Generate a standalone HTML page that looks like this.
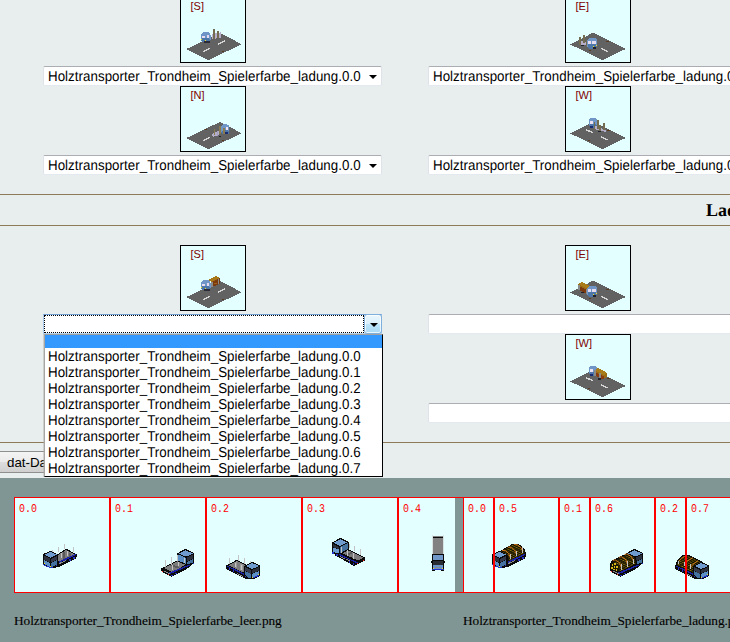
<!DOCTYPE html>
<html lang="de">
<head>
<meta charset="utf-8">
<title>dat-Editor</title>
<style>
html,body{margin:0;padding:0;}
body{width:730px;height:642px;overflow:hidden;position:relative;background:#e8eeee;font-family:"Liberation Serif",serif;font-size:16px;color:#000;}
.abs{position:absolute;}
.hr{position:absolute;left:0;width:730px;height:1px;background:#8c7a58;}
.tile{position:absolute;width:64px;height:64px;border:1px solid #000;background:#e3ffff;overflow:hidden;}
.tile svg{position:absolute;left:0;top:0;}
.tile span{position:absolute;left:9.5px;top:2px;font:11px "Liberation Sans",sans-serif;color:#800000;}
.sel{position:absolute;height:18px;border:1px solid;border-color:#abadb3 #dfe2e9 #e3e9ef #dfe2e9;border-radius:2px;background:#fff;font:13.333px "Liberation Sans",sans-serif;letter-spacing:0.04px;line-height:18px;white-space:nowrap;overflow:hidden;color:#000;}
.sel b{font-weight:normal;position:absolute;left:4px;top:0;transform:scaleY(1.075);transform-origin:0 0;text-rendering:geometricPrecision;}
.sel i{position:absolute;right:4px;top:8px;width:0;height:0;border-left:4px solid transparent;border-right:4px solid transparent;border-top:4px solid #000;}
#drop{position:absolute;left:44px;top:334px;width:337px;height:141px;background:#fff;border:1px solid;border-color:#a0a0a0 #000 #000 #a8a6a2;box-shadow:-1px 0 0 rgba(170,168,164,.45);font:13.333px "Liberation Sans",sans-serif;letter-spacing:0.04px;}
#drop .hl{height:13px;background:#3399ff;}
#drop div{height:16px;line-height:16px;padding-left:3px;white-space:nowrap;}
#drop div+div{transform:scaleY(1.075);transform-origin:0 0;text-rendering:geometricPrecision;}
#panel{position:absolute;left:0;top:478px;width:730px;height:164px;background:#809694;overflow:hidden;}
.img{position:absolute;top:19px;height:96px;background:#e3ffff;}
.t{position:absolute;top:19px;width:94px;height:94px;border:1px solid #ff0000;}
.t span{position:absolute;left:4px;top:4px;text-rendering:geometricPrecision;font:11.8px "Liberation Mono",monospace;letter-spacing:0;transform:scaleX(0.8475);transform-origin:0 0;color:#ff0000;}
.cap{position:absolute;top:135px;-webkit-text-stroke:0.12px #000;letter-spacing:-0.05px;font:13.333px "Liberation Serif",serif;white-space:nowrap;color:#000;}
</style>
</head>
<body>
<!-- section 1 / 2 preview tiles -->
<div class="tile" style="left:180px;top:-3px"><svg width="64" height="64" viewBox="0 0 64 64" shape-rendering="crispEdges"><polygon points="5.2,51.1 38.8,35.0 60.8,46.2 27.2,62.2" fill="#626262"/><line x1="22.0" y1="53.6" x2="28.8" y2="50.5" stroke="#d6d6d6" stroke-width="1.4"/><line x1="37.0" y1="46.4" x2="43.8" y2="43.0" stroke="#d6d6d6" stroke-width="1.4"/><rect x="40.5" y="52.5" width="2.5" height="1.0" fill="#5a3a20"/><polygon points="30.6,36.2 39.7,34.4 39.7,39.6 31.0,41.2" fill="#b4aecb"/><rect x="32.0" y="31.0" width="1.7" height="10.0" fill="#746c50"/><rect x="36.0" y="32.8" width="1.8" height="7.4" fill="#746c50"/><rect x="20.0" y="34.2" width="9.7" height="10.2" rx="3.4" ry="3.8" fill="#6f96c6"/><rect x="20.3" y="40.1" width="9.1" height="4.3" rx="2.2" ry="2.2" fill="#4d76a9"/><rect x="21.4" y="37.6" width="2.6" height="2.6" fill="#e6dcf0"/><rect x="25.6" y="36.8" width="2.6" height="2.8" fill="#e6dcf0"/><rect x="23.2" y="43.2" width="6.0" height="1.6" fill="#2a2a38"/><rect x="20.2" y="40.8" width="1.0" height="1.0" fill="#f0e020"/><rect x="24.3" y="42.2" width="1.0" height="1.0" fill="#f0e020"/></svg><span>[S]</span></div>
<div class="tile" style="left:180px;top:86px"><svg width="64" height="64" viewBox="0 0 64 64" shape-rendering="crispEdges"><polygon points="5.2,51.1 38.8,35.0 60.8,46.2 27.2,62.2" fill="#626262"/><line x1="22.0" y1="53.6" x2="28.8" y2="50.5" stroke="#d6d6d6" stroke-width="1.4"/><rect x="23.5" y="42.0" width="2.5" height="1.0" fill="#5a3a20"/><rect x="40.5" y="52.5" width="2.5" height="1.0" fill="#5a3a20"/><polygon points="30.6,47.2 41.5,41.6 41.5,46.0 31.8,50.2" fill="#b4aecb"/><rect x="32.5" y="42.2" width="1.4" height="6.0" fill="#8a7a50"/><rect x="35.6" y="44.4" width="1.4" height="5.0" fill="#a8a0c0"/><rect x="38.3" y="39.1" width="1.5" height="8.2" fill="#8a7a50"/><rect x="40.1" y="37.3" width="8.2" height="10.1" rx="3.4" ry="3.8" fill="#6f96c6"/><rect x="40.4" y="43.2" width="7.6" height="4.2" rx="2.2" ry="2.2" fill="#4d76a9"/><rect x="42.4" y="41.3" width="1.4" height="6.0" fill="#8a7a50"/><rect x="44.6" y="40.0" width="2.4" height="2.8" fill="#ece2f2"/><rect x="44.2" y="45.4" width="3.0" height="2.0" fill="#1c2a70"/><rect x="37.6" y="48.6" width="2.6" height="1.5" fill="#22222c"/></svg><span>[N]</span></div>
<div class="tile" style="left:565px;top:-3px"><svg width="64" height="64" viewBox="0 0 64 64" shape-rendering="crispEdges"><polygon points="4.2,46.4 27.2,34.6 59.6,51.0 36.4,62.2" fill="#626262"/><line x1="35.3" y1="50.4" x2="41.6" y2="53.4" stroke="#d6d6d6" stroke-width="1.4"/><rect x="40.0" y="43.0" width="2.5" height="1.0" fill="#5a3a20"/><rect x="22.5" y="52.0" width="2.5" height="1.0" fill="#5a3a20"/><polygon points="12.6,42.0 20.7,44.2 20.7,47.6 13.6,46.4" fill="#b4aecb"/><rect x="13.3" y="39.2" width="1.5" height="8.1" fill="#746c50"/><rect x="17.0" y="36.9" width="1.9" height="7.7" fill="#746c50"/><rect x="19.6" y="41.9" width="1.6" height="7.2" fill="#746c50"/><rect x="15.0" y="46.6" width="2.6" height="1.2" fill="#22222c"/><rect x="21.2" y="40.0" width="9.9" height="10.6" rx="3.4" ry="3.8" fill="#6f96c6"/><rect x="21.5" y="46.1" width="9.3" height="4.5" rx="2.2" ry="2.2" fill="#4d76a9"/><rect x="22.2" y="42.6" width="3.0" height="3.4" fill="#e6dcf0"/><rect x="26.0" y="42.6" width="4.2" height="3.2" fill="#e6dcf0"/><rect x="26.6" y="49.0" width="3.6" height="1.8" fill="#20202c"/><rect x="27.4" y="47.6" width="1.0" height="1.0" fill="#f0e020"/><rect x="30.0" y="46.8" width="1.0" height="1.0" fill="#f0e020"/></svg><span>[E]</span></div>
<div class="tile" style="left:565px;top:86px"><svg width="64" height="64" viewBox="0 0 64 64" shape-rendering="crispEdges"><polygon points="4.2,46.4 27.2,34.6 59.6,51.0 36.4,62.2" fill="#626262"/><line x1="20.2" y1="42.7" x2="26.6" y2="45.6" stroke="#d6d6d6" stroke-width="1.4"/><line x1="35.2" y1="50.1" x2="41.5" y2="53.1" stroke="#d6d6d6" stroke-width="1.4"/><rect x="21.5" y="52.6" width="2.5" height="1.0" fill="#5a3a20"/><rect x="41.0" y="43.0" width="2.5" height="1.0" fill="#5a3a20"/><rect x="23.0" y="30.9" width="8.1" height="9.7" rx="3.4" ry="3.8" fill="#6f96c6"/><rect x="23.3" y="36.5" width="7.5" height="4.1" rx="2.2" ry="2.2" fill="#4d76a9"/><rect x="24.4" y="34.0" width="2.6" height="2.6" fill="#ece2f2"/><rect x="24.4" y="38.8" width="2.6" height="2.0" fill="#1c2a70"/><polygon points="27.9,38.2 39.7,43.0 39.7,45.0 28.2,42.0" fill="#b4aecb"/><rect x="27.5" y="35.0" width="1.4" height="7.7" fill="#746c50"/><rect x="31.4" y="33.2" width="1.6" height="8.6" fill="#746c50"/><rect x="33.4" y="38.2" width="1.8" height="6.3" fill="#746c50"/><rect x="37.4" y="36.2" width="1.5" height="6.5" fill="#746c50"/><rect x="32.4" y="43.6" width="2.4" height="1.4" fill="#22222c"/></svg><span>[W]</span></div>
<div class="tile" style="left:180px;top:245px"><svg width="64" height="64" viewBox="0 0 64 64" shape-rendering="crispEdges"><polygon points="5.2,51.1 38.8,35.0 60.8,46.2 27.2,62.2" fill="#626262"/><line x1="22.0" y1="53.6" x2="28.8" y2="50.5" stroke="#d6d6d6" stroke-width="1.4"/><line x1="37.0" y1="46.4" x2="43.8" y2="43.0" stroke="#d6d6d6" stroke-width="1.4"/><rect x="40.5" y="52.5" width="2.5" height="1.0" fill="#5a3a20"/><polygon points="27.0,34.2 35.2,30.1 38.8,31.9 38.8,37.4 32.5,40.5 30.6,40.1 30.6,35.6" fill="#9a6414"/><polygon points="30.8,36.2 38.8,32.2 38.8,37.4 32.5,40.5 30.8,40.1" fill="#7a3a10"/><polygon points="27.0,34.2 35.2,30.1 38.8,31.9 30.6,35.9" fill="#a87818"/><rect x="30.4" y="35.5" width="1.2" height="5.0" fill="#8a8a88"/><rect x="36.6" y="33.0" width="1.2" height="5.0" fill="#8a8a88"/><rect x="33.0" y="37.0" width="3.0" height="1.2" fill="#a06018"/><rect x="20.0" y="34.2" width="9.7" height="10.2" rx="3.4" ry="3.8" fill="#6f96c6"/><rect x="20.3" y="40.1" width="9.1" height="4.3" rx="2.2" ry="2.2" fill="#4d76a9"/><rect x="21.4" y="37.6" width="2.6" height="2.6" fill="#e6dcf0"/><rect x="25.6" y="36.8" width="2.6" height="2.8" fill="#e6dcf0"/><rect x="23.2" y="43.2" width="6.0" height="1.6" fill="#2a2a38"/><rect x="20.2" y="40.8" width="1.0" height="1.0" fill="#f0e020"/><rect x="24.3" y="42.2" width="1.0" height="1.0" fill="#f0e020"/></svg><span>[S]</span></div>
<div class="tile" style="left:565px;top:245px"><svg width="64" height="64" viewBox="0 0 64 64" shape-rendering="crispEdges"><polygon points="4.2,46.4 27.2,34.6 59.6,51.0 36.4,62.2" fill="#626262"/><line x1="35.3" y1="50.4" x2="41.6" y2="53.4" stroke="#d6d6d6" stroke-width="1.4"/><rect x="40.0" y="43.0" width="2.5" height="1.0" fill="#5a3a20"/><rect x="22.5" y="52.0" width="2.5" height="1.0" fill="#5a3a20"/><polygon points="12.1,38.3 15.7,36.0 25.2,40.5 21.2,42.8 21.2,46.4 18.4,46.9 12.6,43.7" fill="#9a6a14"/><polygon points="12.1,38.3 15.7,36.0 25.2,40.5 21.2,42.8" fill="#a87c18"/><polygon points="13.8,40.6 20.6,43.6 20.6,46.4 18.4,46.9 13.8,44.4" fill="#7a3a10"/><rect x="12.4" y="39.0" width="1.2" height="5.0" fill="#8a8a88"/><rect x="19.8" y="43.0" width="1.2" height="4.6" fill="#8a8a88"/><rect x="15.0" y="46.0" width="2.6" height="1.4" fill="#22222c"/><rect x="21.2" y="40.0" width="9.9" height="10.6" rx="3.4" ry="3.8" fill="#6f96c6"/><rect x="21.5" y="46.1" width="9.3" height="4.5" rx="2.2" ry="2.2" fill="#4d76a9"/><rect x="22.2" y="42.6" width="3.0" height="3.4" fill="#e6dcf0"/><rect x="26.0" y="42.6" width="4.2" height="3.2" fill="#e6dcf0"/><rect x="26.6" y="49.0" width="3.6" height="1.8" fill="#20202c"/><rect x="27.4" y="47.6" width="1.0" height="1.0" fill="#f0e020"/><rect x="30.0" y="46.8" width="1.0" height="1.0" fill="#f0e020"/></svg><span>[E]</span></div>
<div class="tile" style="left:565px;top:334px"><svg width="64" height="64" viewBox="0 0 64 64" shape-rendering="crispEdges"><polygon points="4.2,46.4 27.2,34.6 59.6,51.0 36.4,62.2" fill="#626262"/><line x1="20.2" y1="42.7" x2="26.6" y2="45.6" stroke="#d6d6d6" stroke-width="1.4"/><line x1="35.2" y1="50.1" x2="41.5" y2="53.1" stroke="#d6d6d6" stroke-width="1.4"/><rect x="21.5" y="52.6" width="2.5" height="1.0" fill="#5a3a20"/><rect x="41.0" y="43.0" width="2.5" height="1.0" fill="#5a3a20"/><rect x="23.0" y="30.9" width="8.1" height="9.7" rx="3.4" ry="3.8" fill="#6f96c6"/><rect x="23.3" y="36.5" width="7.5" height="4.1" rx="2.2" ry="2.2" fill="#4d76a9"/><rect x="24.4" y="34.0" width="2.6" height="2.6" fill="#ece2f2"/><rect x="24.4" y="38.8" width="2.6" height="2.0" fill="#1c2a70"/><polygon points="28.8,35.6 31.5,32.8 41.0,37.8 41.0,41.4 37.0,44.6 28.8,40.5" fill="#9a6a14"/><polygon points="28.8,35.6 31.5,32.8 41.0,37.8 38.4,40.4" fill="#a87c18"/><polygon points="29.4,37.4 38.0,41.6 38.0,44.0 37.0,44.6 29.4,40.8" fill="#8a3c10"/><rect x="28.2" y="35.4" width="1.3" height="5.6" fill="#8a8a88"/><rect x="33.4" y="38.4" width="1.3" height="5.6" fill="#8a8a88"/><rect x="32.4" y="43.4" width="2.6" height="1.4" fill="#22222c"/></svg><span>[W]</span></div>
<div class="sel" style="left:43px;top:66px;width:337px"><b>Holztransporter_Trondheim_Spielerfarbe_ladung.0.0</b><i></i></div>
<div class="sel" style="left:43px;top:155px;width:337px"><b>Holztransporter_Trondheim_Spielerfarbe_ladung.0.0</b><i></i></div>
<div class="sel" style="left:428px;top:66px;width:337px"><b>Holztransporter_Trondheim_Spielerfarbe_ladung.0.0</b><i></i></div>
<div class="sel" style="left:428px;top:155px;width:337px"><b>Holztransporter_Trondheim_Spielerfarbe_ladung.0.0</b><i></i></div>

<div class="hr" style="top:194px"></div>
<h3 class="abs" style="left:706px;top:201px;margin:0;font:bold 18px 'Liberation Serif',serif;white-space:nowrap;line-height:18px;text-rendering:geometricPrecision">Ladung</h3>
<div class="hr" style="top:225px"></div>

<div class="sel" id="open" style="left:43px;top:314px;width:337px;border-color:#6f9fd2 #a9c9ea #b9d5ee #a9c9ea;border-radius:0"><u style="position:absolute;left:0;top:0;right:17px;bottom:0;border:1px dotted #000"></u></div>
<div class="abs" id="openbtn" style="left:364px;top:314px;width:18px;height:20px;border:1px solid #7fb0dd;border-radius:3px;box-sizing:border-box;box-shadow:inset 0 0 0 1px rgba(255,255,255,.75);background:linear-gradient(#eaf6fd 0,#d9f0fc 48%,#bde6fb 52%,#a7d9f5 100%)"><i style="position:absolute;left:5px;top:8px;width:0;height:0;border-left:4px solid transparent;border-right:4px solid transparent;border-top:4px solid #000"></i></div>
<div class="sel" style="left:428px;top:314px;width:337px"><i></i></div>
<div class="sel" style="left:428px;top:403px;width:337px"><i></i></div>

<div class="hr" style="top:442px"></div>
<div class="abs" id="btn" style="left:-60px;top:451px;width:140px;height:20px;border:1px solid #8e8f8f;border-radius:3px;background:linear-gradient(#f4f4f4 0,#ebebeb 48%,#dddddd 52%,#cfcfcf 100%);font:13.333px 'Liberation Sans',sans-serif;line-height:20px;"><span style="position:absolute;left:66px;top:1px">dat-Datei</span></div>

<div id="drop">
<div class="hl"></div>
<div>Holztransporter_Trondheim_Spielerfarbe_ladung.0.0</div>
<div>Holztransporter_Trondheim_Spielerfarbe_ladung.0.1</div>
<div>Holztransporter_Trondheim_Spielerfarbe_ladung.0.2</div>
<div>Holztransporter_Trondheim_Spielerfarbe_ladung.0.3</div>
<div>Holztransporter_Trondheim_Spielerfarbe_ladung.0.4</div>
<div>Holztransporter_Trondheim_Spielerfarbe_ladung.0.5</div>
<div>Holztransporter_Trondheim_Spielerfarbe_ladung.0.6</div>
<div>Holztransporter_Trondheim_Spielerfarbe_ladung.0.7</div>
</div>

<!-- bottom panel -->
<div id="panel">
 <div class="img" style="left:14px;width:441px"></div>
 <div class="img" style="left:463px;width:300px"></div>
 <svg class="abs" style="left:0;top:-478px" width="730" height="642" viewBox="0 0 730 642" shape-rendering="crispEdges">
<polygon points="57.1,554.7 66.2,548.7 77.3,554.7 76.0,558.4 69.5,561.6 58.8,567.0 54.7,567.8" fill="#0a0a0a"/>
<polygon points="58.4,554.7 66.2,550.1 74.8,554.7 67.0,558.8 59.6,561.6 58.4,561.2" fill="#7c7c7c"/>
<polygon points="62.5,552.6 64.5,551.5 64.5,558.8 62.5,559.8" fill="#5a5a5a"/>
<polygon points="68.6,552.4 70.7,553.4 70.7,556.3 68.6,557.3" fill="#5a5a5a"/>
<rect x="51.7" y="550.1" width="1.0" height="2.2" fill="#c4c4c4"/>
<rect x="57.9" y="546.8" width="1.0" height="5.5" fill="#c4c4c4"/>
<rect x="64.0" y="544.0" width="1.0" height="5.3" fill="#c4c4c4"/>
<rect x="72.9" y="546.8" width="1.0" height="4.7" fill="#c4c4c4"/>
<rect x="60.7" y="553.2" width="1.0" height="4.9" fill="#c4c4c4"/>
<rect x="66.9" y="551.0" width="1.0" height="4.7" fill="#c4c4c4"/>
<polygon points="58.8,561.6 75.6,553.7 76.4,554.8 59.6,562.9" fill="#1c22a8"/>
<polygon points="58.8,563.3 66.2,559.8 66.2,560.8 58.8,564.4" fill="#8a8a8a"/>
<rect x="69.1" y="559.0" width="1.6" height="1.6" fill="#2a30c0"/>
<rect x="73.2" y="557.1" width="1.6" height="1.6" fill="#2a30c0"/>
<polygon points="42.7,554.2 50.5,551.0 58.4,554.5 58.4,564.9 54.2,568.0 49.7,568.0 42.7,564.5" fill="#0a0a0a"/>
<polygon points="44.1,554.7 50.5,552.0 57.0,554.7 50.5,557.8" fill="#6f9bcf"/>
<polygon points="43.8,555.6 50.1,558.8 50.1,562.5 43.8,559.6" fill="#2c2f3c"/>
<polygon points="43.8,560.0 50.1,562.9 50.1,566.8 43.8,563.9" fill="#5b8ec4"/>
<polygon points="51.2,558.8 57.3,555.6 57.3,559.6 51.2,562.5" fill="#343848"/>
<polygon points="51.2,562.9 57.3,560.0 57.3,563.9 54.7,566.2 51.2,566.8" fill="#44719f"/>
<polygon points="43.2,564.1 50.1,567.2 53.0,567.2 53.0,568.0 49.7,568.0 43.2,565.2" fill="#2233cc"/>
<rect x="44.0" y="562.8" width="1.2" height="1.2" fill="#f4e61a"/>
<rect x="49.8" y="565.6" width="1.2" height="1.2" fill="#f4e61a"/>
<polygon points="54.7,564.9 58.4,564.4 58.4,566.6 55.5,567.8" fill="#0a0a0a"/>
<rect x="56.1" y="565.2" width="1.2" height="1.2" fill="#2a30c0"/>
<polygon points="161.0,568.6 177.5,560.0 191.0,564.1 190.2,567.0 172.1,576.7 169.7,576.0 161.0,571.1" fill="#0a0a0a"/>
<polygon points="163.5,568.0 177.5,561.2 186.5,564.4 171.7,572.1" fill="#7c7c7c"/>
<polygon points="169.7,565.2 172.1,563.9 179.5,567.4 177.1,568.6" fill="#5c5c5c"/>
<polygon points="177.3,553.3 185.3,548.7 194.3,553.3 194.3,563.3 189.8,566.2 186.1,565.2 177.3,561.2" fill="#0a0a0a"/>
<polygon points="178.7,553.5 185.3,550.1 192.8,553.5 186.1,556.7" fill="#6f9bcf"/>
<polygon points="178.3,554.5 185.7,557.8 185.7,563.9 178.3,560.6" fill="#5b8ec4"/>
<polygon points="186.8,557.8 193.3,554.5 193.3,558.4 186.8,561.6" fill="#2c2f3c"/>
<polygon points="186.8,562.1 193.3,558.8 193.3,562.7 186.8,564.4" fill="#44719f"/>
<rect x="192.7" y="562.9" width="1.2" height="1.2" fill="#2233cc"/>
<rect x="164.9" y="560.0" width="1.0" height="7.2" fill="#c4c4c4"/>
<rect x="171.0" y="557.1" width="1.0" height="7.4" fill="#c4c4c4"/>
<rect x="176.6" y="554.7" width="1.0" height="5.9" fill="#c4c4c4"/>
<rect x="172.4" y="565.3" width="1.0" height="4.3" fill="#c4c4c4"/>
<rect x="178.2" y="562.2" width="1.0" height="4.1" fill="#c4c4c4"/>
<rect x="184.1" y="558.4" width="1.0" height="4.7" fill="#c4c4c4"/>
<polygon points="168.8,572.7 189.4,564.4 189.9,565.5 169.7,574.2" fill="#1c22a8"/>
<polygon points="163.5,570.3 169.7,573.4 169.7,574.4 163.5,571.3" fill="#8a8a8a"/>
<rect x="162.0" y="570.8" width="1.3" height="1.3" fill="#ff2020"/>
<rect x="167.9" y="573.7" width="1.3" height="1.3" fill="#ff2020"/>
<rect x="171.3" y="574.6" width="1.6" height="1.6" fill="#2a30c0"/>
<rect x="175.3" y="572.6" width="1.6" height="1.6" fill="#2a30c0"/>
<polygon points="225.8,565.8 236.7,559.8 246.6,564.9 245.3,578.1 242.9,577.7 226.4,569.3" fill="#0a0a0a"/>
<polygon points="228.5,565.2 236.7,561.1 245.2,565.3 244.1,571.5 242.5,572.1" fill="#7c7c7c"/>
<polygon points="234.7,562.2 236.7,561.2 236.7,568.0 234.7,567.0" fill="#9a9a9a"/>
<polygon points="240.4,563.5 242.5,564.5 242.5,570.9 240.4,569.9" fill="#9a9a9a"/>
<rect x="229.0" y="557.9" width="1.0" height="5.9" fill="#c4c4c4"/>
<rect x="237.9" y="555.1" width="1.0" height="5.5" fill="#c4c4c4"/>
<rect x="244.0" y="557.9" width="1.0" height="5.9" fill="#c4c4c4"/>
<rect x="249.8" y="561.1" width="1.0" height="2.0" fill="#c4c4c4"/>
<rect x="235.4" y="562.9" width="1.0" height="4.3" fill="#c4c4c4"/>
<rect x="241.1" y="565.3" width="1.0" height="5.1" fill="#c4c4c4"/>
<polygon points="226.8,565.2 243.9,573.6 243.4,574.8 226.4,566.4" fill="#1c22a8"/>
<polygon points="237.1,573.2 243.3,576.0 243.3,577.0 237.1,574.2" fill="#8a8a8a"/>
<rect x="228.5" y="568.0" width="1.6" height="1.6" fill="#2a30c0"/>
<rect x="232.6" y="570.0" width="1.6" height="1.6" fill="#2a30c0"/>
<polygon points="244.4,566.0 252.3,561.9 260.3,565.5 260.3,576.0 252.7,579.3 245.3,578.5 244.4,576.0" fill="#0a0a0a"/>
<polygon points="245.8,566.2 252.3,563.0 258.9,566.0 252.3,569.0" fill="#6f9bcf"/>
<polygon points="245.3,567.2 250.7,569.9 250.7,573.6 245.3,570.9" fill="#343848"/>
<polygon points="245.3,571.3 250.7,574.0 250.7,578.1 247.0,577.3 245.3,575.0" fill="#44719f"/>
<polygon points="251.8,570.1 259.2,567.0 259.2,570.4 251.8,573.6" fill="#2c2f3c"/>
<polygon points="251.8,574.0 259.2,570.8 259.2,574.8 251.8,577.8" fill="#5b8ec4"/>
<polygon points="251.5,577.8 259.3,574.8 259.3,575.9 251.5,578.9" fill="#2233cc"/>
<rect x="252.0" y="576.9" width="1.2" height="1.2" fill="#f4e61a"/>
<rect x="257.9" y="574.0" width="1.2" height="1.2" fill="#f4e61a"/>
<polygon points="244.4,575.2 247.4,576.0 247.4,578.5 244.4,577.3" fill="#0a0a0a"/>
<rect x="245.2" y="576.2" width="1.2" height="1.2" fill="#2a30c0"/>
<polygon points="334.7,552.5 348.7,549.2 365.0,557.4 364.7,560.7 354.5,566.0 351.2,564.4 335.1,555.3" fill="#0a0a0a"/>
<polygon points="342.1,553.0 348.7,550.6 363.1,557.8 357.7,560.4" fill="#7c7c7c"/>
<polygon points="351.2,552.1 353.2,553.0 347.9,555.5 345.8,554.5" fill="#5c5c5c"/>
<polygon points="339.7,553.9 357.9,562.6 357.4,563.7 339.2,555.0" fill="#1c22a8"/>
<polygon points="339.7,555.8 349.5,560.4 349.5,561.4 339.7,556.7" fill="#8a8a8a"/>
<rect x="362.8" y="559.6" width="1.3" height="1.3" fill="#ff2020"/>
<rect x="356.8" y="562.6" width="1.3" height="1.3" fill="#ff2020"/>
<rect x="336.0" y="554.1" width="1.6" height="1.6" fill="#2a30c0"/>
<rect x="348.7" y="561.3" width="1.6" height="1.6" fill="#2a30c0"/>
<rect x="352.8" y="563.4" width="1.6" height="1.6" fill="#2a30c0"/>
<polygon points="331.7,542.6 340.5,537.9 348.9,542.0 348.9,550.0 340.1,554.4 336.0,554.1 331.7,552.5" fill="#0a0a0a"/>
<polygon points="333.2,542.8 340.5,539.3 347.2,542.4 340.1,545.9" fill="#6f9bcf"/>
<polygon points="332.8,543.8 339.0,547.0 339.0,549.2 332.8,547.1" fill="#2c2f3c"/>
<polygon points="332.8,547.5 339.0,549.6 339.0,553.3 332.8,552.1" fill="#6b9bd0"/>
<polygon points="340.2,547.0 347.7,543.4 347.7,549.2 340.2,553.0" fill="#44719f"/>
<rect x="332.3" y="552.3" width="1.2" height="1.2" fill="#2233cc"/>
<rect x="341.0" y="547.1" width="1.0" height="5.9" fill="#c4c4c4"/>
<rect x="348.9" y="544.2" width="1.0" height="3.9" fill="#c4c4c4"/>
<rect x="354.0" y="546.3" width="1.0" height="5.1" fill="#c4c4c4"/>
<rect x="359.9" y="548.8" width="1.0" height="5.9" fill="#c4c4c4"/>
<rect x="347.4" y="550.4" width="1.0" height="5.1" fill="#c4c4c4"/>
<rect x="353.1" y="552.9" width="1.0" height="5.9" fill="#c4c4c4"/>
<polygon points="432.2,535.7 443.7,535.7 443.7,554.6 432.2,554.6" fill="#828282"/>
<polygon points="433.0,536.9 442.9,536.9 442.9,538.2 433.0,538.2" fill="#0a0a0a"/>
<polygon points="431.8,534.9 432.8,534.9 432.8,553.8 431.8,553.8" fill="#d8e4e4"/>
<polygon points="443.1,534.9 444.1,534.9 444.1,553.8 443.1,553.8" fill="#d8e4e4"/>
<polygon points="432.0,553.8 443.9,553.8 443.9,569.8 432.0,569.8" fill="#0a0a0a"/>
<polygon points="431.0,561.0 444.9,561.0 444.9,563.0 431.0,563.0" fill="#0a0a0a"/>
<polygon points="433.3,555.0 442.9,555.0 442.9,559.9 433.3,559.9" fill="#7099c9"/>
<polygon points="433.0,561.2 443.0,561.2 443.0,564.5 433.0,564.5" fill="#2b2d35"/>
<polygon points="433.3,564.9 442.9,564.9 442.9,569.1 433.3,569.1" fill="#6a94c6"/>
<polygon points="435.1,566.9 440.8,566.9 440.8,568.1 435.1,568.1" fill="#8a8a8a"/>
<polygon points="432.2,569.1 443.7,569.1 443.7,570.1 432.2,570.1" fill="#2233cc"/>
<polygon points="432.2,569.8 434.7,569.8 434.7,570.9 432.2,570.9" fill="#0a0a0a"/>
<polygon points="441.2,569.8 443.9,569.8 443.9,570.9 441.2,570.9" fill="#0a0a0a"/>
<rect x="432.9" y="567.7" width="1.2" height="1.2" fill="#f4e61a"/>
<rect x="441.7" y="567.7" width="1.2" height="1.2" fill="#f4e61a"/>
<polygon points="506.1,554.7 515.2,548.7 526.3,554.7 525.0,558.4 518.5,561.6 507.8,567.0 503.7,567.8" fill="#0a0a0a"/>
<polygon points="498.5,552.0 512.5,543.8 516.6,543.6 520.3,545.2 525.2,549.6 525.8,554.7 508.8,562.9 507.5,554.7" fill="#0a0a0a"/>
<clipPath id="c1"><polygon points="500.1,552.2 512.5,545.0 516.3,544.6 519.6,546.0 524.1,550.0 524.4,554.0 508.9,561.2 507.9,555.1" fill="#000"/></clipPath>
<g clip-path="url(#c1)" shape-rendering="auto"><polygon points="500.1,552.2 512.5,545.0 516.3,544.6 519.6,546.0 524.1,550.0 524.4,554.0 508.9,561.2 507.9,555.1" fill="#6f5d0a"/><line x1="476.0" y1="539.2" x2="523.0" y2="515.7" stroke="#0c0a02" stroke-width="0.9"/><line x1="477.3" y1="541.7" x2="524.3" y2="518.3" stroke="#8d7a14" stroke-width="0.9"/><line x1="476.9" y1="540.9" x2="523.8" y2="517.4" stroke="#0c0a02" stroke-width="0.9"/><line x1="477.7" y1="542.6" x2="524.7" y2="519.1" stroke="#0c0a02" stroke-width="0.9"/><line x1="479.0" y1="545.1" x2="526.0" y2="521.7" stroke="#8d7a14" stroke-width="0.9"/><line x1="478.6" y1="544.3" x2="525.5" y2="520.8" stroke="#0c0a02" stroke-width="0.9"/><line x1="479.4" y1="546.0" x2="526.4" y2="522.5" stroke="#0c0a02" stroke-width="0.9"/><line x1="480.7" y1="548.5" x2="527.7" y2="525.0" stroke="#8d7a14" stroke-width="0.9"/><line x1="480.3" y1="547.7" x2="527.2" y2="524.2" stroke="#0c0a02" stroke-width="0.9"/><line x1="481.1" y1="549.4" x2="528.1" y2="525.9" stroke="#0c0a02" stroke-width="0.9"/><line x1="482.4" y1="551.9" x2="529.4" y2="528.4" stroke="#8d7a14" stroke-width="0.9"/><line x1="482.0" y1="551.1" x2="528.9" y2="527.6" stroke="#0c0a02" stroke-width="0.9"/><line x1="482.8" y1="552.8" x2="529.8" y2="529.3" stroke="#0c0a02" stroke-width="0.9"/><line x1="484.1" y1="555.3" x2="531.1" y2="531.8" stroke="#8d7a14" stroke-width="0.9"/><line x1="483.7" y1="554.5" x2="530.6" y2="531.0" stroke="#0c0a02" stroke-width="0.9"/><line x1="484.5" y1="556.2" x2="531.5" y2="532.7" stroke="#0c0a02" stroke-width="0.9"/><line x1="485.8" y1="558.7" x2="532.8" y2="535.2" stroke="#8d7a14" stroke-width="0.9"/><line x1="485.4" y1="557.9" x2="532.3" y2="534.4" stroke="#0c0a02" stroke-width="0.9"/><line x1="486.2" y1="559.6" x2="533.2" y2="536.1" stroke="#0c0a02" stroke-width="0.9"/><line x1="487.5" y1="562.1" x2="534.5" y2="538.6" stroke="#8d7a14" stroke-width="0.9"/><line x1="487.1" y1="561.3" x2="534.0" y2="537.8" stroke="#0c0a02" stroke-width="0.9"/><line x1="487.9" y1="563.0" x2="534.9" y2="539.5" stroke="#0c0a02" stroke-width="0.9"/><line x1="489.2" y1="565.5" x2="536.2" y2="542.0" stroke="#8d7a14" stroke-width="0.9"/><line x1="488.8" y1="564.7" x2="535.7" y2="541.2" stroke="#0c0a02" stroke-width="0.9"/><line x1="489.6" y1="566.4" x2="536.6" y2="542.9" stroke="#0c0a02" stroke-width="0.9"/><line x1="490.9" y1="568.9" x2="537.9" y2="545.4" stroke="#8d7a14" stroke-width="0.9"/><line x1="490.5" y1="568.1" x2="537.4" y2="544.6" stroke="#0c0a02" stroke-width="0.9"/><line x1="491.3" y1="569.8" x2="538.3" y2="546.3" stroke="#0c0a02" stroke-width="0.9"/><line x1="492.6" y1="572.3" x2="539.6" y2="548.8" stroke="#8d7a14" stroke-width="0.9"/><line x1="492.2" y1="571.5" x2="539.1" y2="548.0" stroke="#0c0a02" stroke-width="0.9"/><line x1="493.0" y1="573.2" x2="540.0" y2="549.7" stroke="#0c0a02" stroke-width="0.9"/><line x1="494.3" y1="575.7" x2="541.3" y2="552.2" stroke="#8d7a14" stroke-width="0.9"/><line x1="493.9" y1="574.9" x2="540.8" y2="551.4" stroke="#0c0a02" stroke-width="0.9"/><line x1="494.7" y1="576.6" x2="541.7" y2="553.1" stroke="#0c0a02" stroke-width="0.9"/><line x1="496.0" y1="579.1" x2="543.0" y2="555.6" stroke="#8d7a14" stroke-width="0.9"/><line x1="495.6" y1="578.3" x2="542.5" y2="554.8" stroke="#0c0a02" stroke-width="0.9"/><line x1="496.4" y1="580.0" x2="543.4" y2="556.5" stroke="#0c0a02" stroke-width="0.9"/><line x1="497.7" y1="582.5" x2="544.7" y2="559.0" stroke="#8d7a14" stroke-width="0.9"/><line x1="497.3" y1="581.7" x2="544.2" y2="558.2" stroke="#0c0a02" stroke-width="0.9"/><line x1="498.1" y1="583.4" x2="545.1" y2="559.9" stroke="#0c0a02" stroke-width="0.9"/><line x1="499.4" y1="585.9" x2="546.4" y2="562.4" stroke="#8d7a14" stroke-width="0.9"/><line x1="499.0" y1="585.1" x2="545.9" y2="561.6" stroke="#0c0a02" stroke-width="0.9"/><line x1="499.8" y1="586.8" x2="546.8" y2="563.3" stroke="#0c0a02" stroke-width="0.9"/><line x1="501.1" y1="589.3" x2="548.1" y2="565.8" stroke="#8d7a14" stroke-width="0.9"/><line x1="500.7" y1="588.5" x2="547.6" y2="565.0" stroke="#0c0a02" stroke-width="0.9"/><line x1="501.5" y1="590.2" x2="548.5" y2="566.7" stroke="#0c0a02" stroke-width="0.9"/><line x1="502.7" y1="513.3" x2="549.7" y2="536.8" stroke="#0c0a02" stroke-width="0.8"/><line x1="501.6" y1="515.6" x2="548.5" y2="539.1" stroke="#0c0a02" stroke-width="0.8"/><line x1="500.4" y1="517.9" x2="547.4" y2="541.4" stroke="#0c0a02" stroke-width="0.8"/><line x1="499.2" y1="520.3" x2="546.2" y2="543.7" stroke="#0c0a02" stroke-width="0.8"/><line x1="498.1" y1="522.6" x2="545.0" y2="546.1" stroke="#0c0a02" stroke-width="0.8"/><line x1="496.9" y1="524.9" x2="543.9" y2="548.4" stroke="#0c0a02" stroke-width="0.8"/><line x1="495.8" y1="527.2" x2="542.7" y2="550.7" stroke="#0c0a02" stroke-width="0.8"/><line x1="494.6" y1="529.6" x2="541.5" y2="553.0" stroke="#0c0a02" stroke-width="0.8"/><line x1="493.4" y1="531.9" x2="540.4" y2="555.4" stroke="#0c0a02" stroke-width="0.8"/><line x1="492.3" y1="534.2" x2="539.2" y2="557.7" stroke="#0c0a02" stroke-width="0.8"/><line x1="491.1" y1="536.5" x2="538.1" y2="560.0" stroke="#0c0a02" stroke-width="0.8"/><line x1="489.9" y1="538.9" x2="536.9" y2="562.3" stroke="#0c0a02" stroke-width="0.8"/><line x1="488.8" y1="541.2" x2="535.7" y2="564.7" stroke="#0c0a02" stroke-width="0.8"/><line x1="487.6" y1="543.5" x2="534.6" y2="567.0" stroke="#0c0a02" stroke-width="0.8"/><line x1="486.5" y1="545.8" x2="533.4" y2="569.3" stroke="#0c0a02" stroke-width="0.8"/><line x1="485.3" y1="548.2" x2="532.2" y2="571.6" stroke="#0c0a02" stroke-width="0.8"/><line x1="484.1" y1="550.5" x2="531.1" y2="574.0" stroke="#0c0a02" stroke-width="0.8"/><line x1="483.0" y1="552.8" x2="529.9" y2="576.3" stroke="#0c0a02" stroke-width="0.8"/><line x1="481.8" y1="555.1" x2="528.8" y2="578.6" stroke="#0c0a02" stroke-width="0.8"/><line x1="480.6" y1="557.5" x2="527.6" y2="580.9" stroke="#0c0a02" stroke-width="0.8"/><line x1="479.5" y1="559.8" x2="526.4" y2="583.3" stroke="#0c0a02" stroke-width="0.8"/><line x1="478.3" y1="562.1" x2="525.3" y2="585.6" stroke="#0c0a02" stroke-width="0.8"/><line x1="477.2" y1="564.4" x2="524.1" y2="587.9" stroke="#0c0a02" stroke-width="0.8"/><line x1="476.0" y1="566.8" x2="522.9" y2="590.2" stroke="#0c0a02" stroke-width="0.8"/><line x1="474.8" y1="569.1" x2="521.8" y2="592.6" stroke="#0c0a02" stroke-width="0.8"/></g>
<polyline points="502.0,550.4 505.5,550.5 508.8,553.8 510.2,557.5" fill="none" stroke="#e07a1a" stroke-width="0.9" shape-rendering="auto"/>
<polyline points="507.9,547.1 511.6,547.4 514.9,550.5 516.3,554.2" fill="none" stroke="#e07a1a" stroke-width="0.9" shape-rendering="auto"/>
<polyline points="513.9,544.5 517.4,544.8 521.1,547.7 522.6,551.2" fill="none" stroke="#e07a1a" stroke-width="0.9" shape-rendering="auto"/>
<rect x="510.1" y="553.8" width="1.0" height="5.1" fill="#c4c4c4"/>
<rect x="516.1" y="550.7" width="1.0" height="5.1" fill="#c4c4c4"/>
<rect x="522.2" y="547.4" width="1.0" height="5.1" fill="#c4c4c4"/>
<polygon points="507.8,561.6 524.6,553.7 525.4,554.8 508.6,562.9" fill="#1c22a8"/>
<polygon points="507.8,563.3 515.2,559.8 515.2,560.8 507.8,564.4" fill="#8a8a8a"/>
<rect x="518.1" y="559.0" width="1.6" height="1.6" fill="#2a30c0"/>
<rect x="522.2" y="557.1" width="1.6" height="1.6" fill="#2a30c0"/>
<polygon points="491.7,554.2 499.5,551.0 507.4,554.5 507.4,564.9 503.2,568.0 498.7,568.0 491.7,564.5" fill="#0a0a0a"/>
<polygon points="493.1,554.7 499.5,552.0 506.0,554.7 499.5,557.8" fill="#6f9bcf"/>
<polygon points="492.8,555.6 499.1,558.8 499.1,562.5 492.8,559.6" fill="#2c2f3c"/>
<polygon points="492.8,560.0 499.1,562.9 499.1,566.8 492.8,563.9" fill="#5b8ec4"/>
<polygon points="500.2,558.8 506.3,555.6 506.3,559.6 500.2,562.5" fill="#343848"/>
<polygon points="500.2,562.9 506.3,560.0 506.3,563.9 503.7,566.2 500.2,566.8" fill="#44719f"/>
<polygon points="492.2,564.1 499.1,567.2 502.0,567.2 502.0,568.0 498.7,568.0 492.2,565.2" fill="#2233cc"/>
<rect x="493.0" y="562.8" width="1.2" height="1.2" fill="#f4e61a"/>
<rect x="498.8" y="565.6" width="1.2" height="1.2" fill="#f4e61a"/>
<polygon points="503.7,564.9 507.4,564.4 507.4,566.6 504.5,567.8" fill="#0a0a0a"/>
<rect x="505.1" y="565.2" width="1.2" height="1.2" fill="#2a30c0"/>
<polygon points="610.0,568.6 626.5,560.0 640.0,564.1 639.2,567.0 621.1,576.7 618.7,576.0 610.0,571.1" fill="#0a0a0a"/>
<polygon points="626.3,553.3 634.3,548.7 643.3,553.3 643.3,563.3 638.8,566.2 635.1,565.2 626.3,561.2" fill="#0a0a0a"/>
<polygon points="627.7,553.5 634.3,550.1 641.8,553.5 635.1,556.7" fill="#6f9bcf"/>
<polygon points="627.3,554.5 634.7,557.8 634.7,563.9 627.3,560.6" fill="#5b8ec4"/>
<polygon points="635.8,557.8 642.3,554.5 642.3,558.4 635.8,561.6" fill="#2c2f3c"/>
<polygon points="635.8,562.1 642.3,558.8 642.3,562.7 635.8,564.4" fill="#44719f"/>
<rect x="641.7" y="562.9" width="1.2" height="1.2" fill="#2233cc"/>
<polygon points="609.6,563.9 612.4,560.1 627.5,553.2 630.3,554.1 635.3,557.0 636.5,559.7 636.5,565.0 619.7,573.0 615.5,572.0 609.8,568.3" fill="#0a0a0a"/>
<clipPath id="c2"><polygon points="614.3,561.5 627.5,554.6 630.2,555.2 634.3,557.7 635.3,560.1 635.3,564.2 619.7,571.6 618.8,566.2" fill="#000"/></clipPath>
<g clip-path="url(#c2)" shape-rendering="auto"><polygon points="614.3,561.5 627.5,554.6 630.2,555.2 634.3,557.7 635.3,560.1 635.3,564.2 619.7,571.6 618.8,566.2" fill="#6f5d0a"/><line x1="592.8" y1="550.4" x2="633.9" y2="529.9" stroke="#8d7a14" stroke-width="0.9"/><line x1="592.4" y1="549.5" x2="633.4" y2="529.0" stroke="#0c0a02" stroke-width="0.9"/><line x1="593.2" y1="551.2" x2="634.3" y2="530.7" stroke="#0c0a02" stroke-width="0.9"/><line x1="594.5" y1="553.8" x2="635.6" y2="533.3" stroke="#8d7a14" stroke-width="0.9"/><line x1="594.1" y1="552.9" x2="635.1" y2="532.4" stroke="#0c0a02" stroke-width="0.9"/><line x1="594.9" y1="554.6" x2="636.0" y2="534.1" stroke="#0c0a02" stroke-width="0.9"/><line x1="596.2" y1="557.2" x2="637.3" y2="536.7" stroke="#8d7a14" stroke-width="0.9"/><line x1="595.8" y1="556.3" x2="636.8" y2="535.8" stroke="#0c0a02" stroke-width="0.9"/><line x1="596.6" y1="558.0" x2="637.7" y2="537.5" stroke="#0c0a02" stroke-width="0.9"/><line x1="597.9" y1="560.6" x2="639.0" y2="540.1" stroke="#8d7a14" stroke-width="0.9"/><line x1="597.5" y1="559.7" x2="638.5" y2="539.2" stroke="#0c0a02" stroke-width="0.9"/><line x1="598.3" y1="561.4" x2="639.4" y2="540.9" stroke="#0c0a02" stroke-width="0.9"/><line x1="599.6" y1="564.0" x2="640.7" y2="543.5" stroke="#8d7a14" stroke-width="0.9"/><line x1="599.2" y1="563.1" x2="640.2" y2="542.6" stroke="#0c0a02" stroke-width="0.9"/><line x1="600.0" y1="564.8" x2="641.1" y2="544.3" stroke="#0c0a02" stroke-width="0.9"/><line x1="601.3" y1="567.4" x2="642.4" y2="546.9" stroke="#8d7a14" stroke-width="0.9"/><line x1="600.9" y1="566.5" x2="641.9" y2="546.0" stroke="#0c0a02" stroke-width="0.9"/><line x1="601.7" y1="568.2" x2="642.8" y2="547.7" stroke="#0c0a02" stroke-width="0.9"/><line x1="603.0" y1="570.8" x2="644.1" y2="550.3" stroke="#8d7a14" stroke-width="0.9"/><line x1="602.6" y1="569.9" x2="643.6" y2="549.4" stroke="#0c0a02" stroke-width="0.9"/><line x1="603.4" y1="571.6" x2="644.5" y2="551.1" stroke="#0c0a02" stroke-width="0.9"/><line x1="604.7" y1="574.2" x2="645.8" y2="553.7" stroke="#8d7a14" stroke-width="0.9"/><line x1="604.3" y1="573.3" x2="645.3" y2="552.8" stroke="#0c0a02" stroke-width="0.9"/><line x1="605.1" y1="575.0" x2="646.2" y2="554.5" stroke="#0c0a02" stroke-width="0.9"/><line x1="606.4" y1="577.6" x2="647.5" y2="557.0" stroke="#8d7a14" stroke-width="0.9"/><line x1="606.0" y1="576.7" x2="647.0" y2="556.2" stroke="#0c0a02" stroke-width="0.9"/><line x1="606.8" y1="578.4" x2="647.9" y2="557.9" stroke="#0c0a02" stroke-width="0.9"/><line x1="608.1" y1="581.0" x2="649.2" y2="560.4" stroke="#8d7a14" stroke-width="0.9"/><line x1="607.7" y1="580.1" x2="648.7" y2="559.6" stroke="#0c0a02" stroke-width="0.9"/><line x1="608.5" y1="581.8" x2="649.6" y2="561.3" stroke="#0c0a02" stroke-width="0.9"/><line x1="609.8" y1="584.4" x2="650.9" y2="563.8" stroke="#8d7a14" stroke-width="0.9"/><line x1="609.4" y1="583.5" x2="650.4" y2="563.0" stroke="#0c0a02" stroke-width="0.9"/><line x1="610.2" y1="585.2" x2="651.3" y2="564.7" stroke="#0c0a02" stroke-width="0.9"/><line x1="611.5" y1="587.8" x2="652.6" y2="567.2" stroke="#8d7a14" stroke-width="0.9"/><line x1="611.1" y1="586.9" x2="652.1" y2="566.4" stroke="#0c0a02" stroke-width="0.9"/><line x1="611.9" y1="588.6" x2="653.0" y2="568.1" stroke="#0c0a02" stroke-width="0.9"/><line x1="613.2" y1="591.2" x2="654.3" y2="570.6" stroke="#8d7a14" stroke-width="0.9"/><line x1="612.8" y1="590.3" x2="653.8" y2="569.8" stroke="#0c0a02" stroke-width="0.9"/><line x1="613.6" y1="592.0" x2="654.7" y2="571.5" stroke="#0c0a02" stroke-width="0.9"/><line x1="614.9" y1="594.6" x2="656.0" y2="574.0" stroke="#8d7a14" stroke-width="0.9"/><line x1="614.5" y1="593.7" x2="655.5" y2="573.2" stroke="#0c0a02" stroke-width="0.9"/><line x1="615.3" y1="595.4" x2="656.4" y2="574.9" stroke="#0c0a02" stroke-width="0.9"/><line x1="616.6" y1="598.0" x2="657.7" y2="577.4" stroke="#8d7a14" stroke-width="0.9"/><line x1="616.2" y1="597.1" x2="657.2" y2="576.6" stroke="#0c0a02" stroke-width="0.9"/><line x1="615.9" y1="529.5" x2="657.0" y2="550.1" stroke="#0c0a02" stroke-width="0.8"/><line x1="614.7" y1="531.9" x2="655.8" y2="552.4" stroke="#0c0a02" stroke-width="0.8"/><line x1="613.6" y1="534.2" x2="654.6" y2="554.7" stroke="#0c0a02" stroke-width="0.8"/><line x1="612.4" y1="536.5" x2="653.5" y2="557.1" stroke="#0c0a02" stroke-width="0.8"/><line x1="611.2" y1="538.8" x2="652.3" y2="559.4" stroke="#0c0a02" stroke-width="0.8"/><line x1="610.1" y1="541.2" x2="651.1" y2="561.7" stroke="#0c0a02" stroke-width="0.8"/><line x1="608.9" y1="543.5" x2="650.0" y2="564.0" stroke="#0c0a02" stroke-width="0.8"/><line x1="607.7" y1="545.8" x2="648.8" y2="566.4" stroke="#0c0a02" stroke-width="0.8"/><line x1="606.6" y1="548.1" x2="647.7" y2="568.7" stroke="#0c0a02" stroke-width="0.8"/><line x1="605.4" y1="550.5" x2="646.5" y2="571.0" stroke="#0c0a02" stroke-width="0.8"/><line x1="604.3" y1="552.8" x2="645.3" y2="573.3" stroke="#0c0a02" stroke-width="0.8"/><line x1="603.1" y1="555.1" x2="644.2" y2="575.7" stroke="#0c0a02" stroke-width="0.8"/><line x1="601.9" y1="557.5" x2="643.0" y2="578.0" stroke="#0c0a02" stroke-width="0.8"/><line x1="600.8" y1="559.8" x2="641.8" y2="580.3" stroke="#0c0a02" stroke-width="0.8"/><line x1="599.6" y1="562.1" x2="640.7" y2="582.6" stroke="#0c0a02" stroke-width="0.8"/><line x1="598.4" y1="564.4" x2="639.5" y2="585.0" stroke="#0c0a02" stroke-width="0.8"/><line x1="597.3" y1="566.8" x2="638.4" y2="587.3" stroke="#0c0a02" stroke-width="0.8"/><line x1="596.1" y1="569.1" x2="637.2" y2="589.6" stroke="#0c0a02" stroke-width="0.8"/><line x1="595.0" y1="571.4" x2="636.0" y2="591.9" stroke="#0c0a02" stroke-width="0.8"/><line x1="593.8" y1="573.7" x2="634.9" y2="594.3" stroke="#0c0a02" stroke-width="0.8"/><line x1="592.6" y1="576.1" x2="633.7" y2="596.6" stroke="#0c0a02" stroke-width="0.8"/></g>
<polygon points="610.6,564.2 614.6,561.7 619.0,566.1 619.0,571.2 614.7,570.5 610.8,567.9" fill="#1c1804"/>
<rect x="611.6" y="563.9" width="1.7" height="1.7" fill="#d8b816"/>
<rect x="614.3" y="563.1" width="1.7" height="1.7" fill="#d8b816"/>
<rect x="613.7" y="566.0" width="1.7" height="1.7" fill="#d8b816"/>
<rect x="611.0" y="566.9" width="1.7" height="1.7" fill="#d8b816"/>
<rect x="616.2" y="566.4" width="1.7" height="1.7" fill="#d8b816"/>
<rect x="615.7" y="569.1" width="1.7" height="1.7" fill="#d8b816"/>
<rect x="612.9" y="568.5" width="1.7" height="1.7" fill="#d8b816"/>
<polyline points="612.7,560.6 615.1,559.8 619.5,562.8 621.3,567.7" fill="none" stroke="#e07a1a" stroke-width="0.9" shape-rendering="auto"/>
<polyline points="618.8,557.4 621.5,556.7 625.8,559.5 627.5,564.4" fill="none" stroke="#e07a1a" stroke-width="0.9" shape-rendering="auto"/>
<polyline points="624.4,554.6 626.9,553.9 631.2,556.5 633.5,560.6" fill="none" stroke="#e07a1a" stroke-width="0.9" shape-rendering="auto"/>
<rect x="621.0" y="564.2" width="1.0" height="5.5" fill="#c4c4c4"/>
<rect x="627.0" y="561.3" width="1.0" height="5.4" fill="#c4c4c4"/>
<rect x="633.0" y="558.7" width="1.0" height="5.1" fill="#c4c4c4"/>
<polygon points="617.8,572.7 638.4,564.4 638.9,565.5 618.7,574.2" fill="#1c22a8"/>
<polygon points="612.5,570.3 618.7,573.4 618.7,574.4 612.5,571.3" fill="#8a8a8a"/>
<rect x="611.0" y="570.8" width="1.3" height="1.3" fill="#ff2020"/>
<rect x="616.9" y="573.7" width="1.3" height="1.3" fill="#ff2020"/>
<rect x="620.3" y="574.6" width="1.6" height="1.6" fill="#2a30c0"/>
<rect x="624.3" y="572.6" width="1.6" height="1.6" fill="#2a30c0"/>
<polygon points="674.8,565.8 685.7,559.8 695.6,564.9 694.3,578.1 691.9,577.7 675.4,569.3" fill="#0a0a0a"/>
<polygon points="675.3,565.6 677.4,559.7 683.0,554.7 688.6,554.7 694.9,558.0 702.3,561.7 695.3,569.5 693.3,573.6" fill="#0a0a0a"/>
<clipPath id="c3"><polygon points="676.9,565.1 678.7,560.1 683.4,556.0 688.1,556.0 694.5,559.0 700.7,562.3 694.5,569.1 692.7,572.8" fill="#000"/></clipPath>
<g clip-path="url(#c3)" shape-rendering="auto"><polygon points="676.9,565.1 678.7,560.1 683.4,556.0 688.1,556.0 694.5,559.0 700.7,562.3 694.5,569.1 692.7,572.8" fill="#6f5d0a"/><line x1="678.5" y1="527.4" x2="724.6" y2="550.4" stroke="#0c0a02" stroke-width="0.9"/><line x1="677.2" y1="529.9" x2="723.3" y2="553.0" stroke="#8d7a14" stroke-width="0.9"/><line x1="677.7" y1="529.1" x2="723.7" y2="552.1" stroke="#0c0a02" stroke-width="0.9"/><line x1="676.8" y1="530.8" x2="722.9" y2="553.8" stroke="#0c0a02" stroke-width="0.9"/><line x1="675.5" y1="533.3" x2="721.6" y2="556.4" stroke="#8d7a14" stroke-width="0.9"/><line x1="676.0" y1="532.5" x2="722.0" y2="555.5" stroke="#0c0a02" stroke-width="0.9"/><line x1="675.1" y1="534.2" x2="721.2" y2="557.2" stroke="#0c0a02" stroke-width="0.9"/><line x1="673.8" y1="536.7" x2="719.9" y2="559.8" stroke="#8d7a14" stroke-width="0.9"/><line x1="674.3" y1="535.9" x2="720.3" y2="558.9" stroke="#0c0a02" stroke-width="0.9"/><line x1="673.4" y1="537.6" x2="719.5" y2="560.6" stroke="#0c0a02" stroke-width="0.9"/><line x1="672.1" y1="540.1" x2="718.2" y2="563.2" stroke="#8d7a14" stroke-width="0.9"/><line x1="672.6" y1="539.3" x2="718.6" y2="562.3" stroke="#0c0a02" stroke-width="0.9"/><line x1="671.7" y1="541.0" x2="717.8" y2="564.0" stroke="#0c0a02" stroke-width="0.9"/><line x1="670.4" y1="543.5" x2="716.5" y2="566.6" stroke="#8d7a14" stroke-width="0.9"/><line x1="670.9" y1="542.7" x2="716.9" y2="565.7" stroke="#0c0a02" stroke-width="0.9"/><line x1="670.0" y1="544.4" x2="716.1" y2="567.4" stroke="#0c0a02" stroke-width="0.9"/><line x1="668.7" y1="546.9" x2="714.8" y2="570.0" stroke="#8d7a14" stroke-width="0.9"/><line x1="669.2" y1="546.1" x2="715.2" y2="569.1" stroke="#0c0a02" stroke-width="0.9"/><line x1="668.3" y1="547.8" x2="714.4" y2="570.8" stroke="#0c0a02" stroke-width="0.9"/><line x1="667.0" y1="550.3" x2="713.1" y2="573.4" stroke="#8d7a14" stroke-width="0.9"/><line x1="667.5" y1="549.5" x2="713.5" y2="572.5" stroke="#0c0a02" stroke-width="0.9"/><line x1="666.6" y1="551.2" x2="712.7" y2="574.2" stroke="#0c0a02" stroke-width="0.9"/><line x1="665.3" y1="553.7" x2="711.4" y2="576.8" stroke="#8d7a14" stroke-width="0.9"/><line x1="665.8" y1="552.9" x2="711.8" y2="575.9" stroke="#0c0a02" stroke-width="0.9"/><line x1="664.9" y1="554.6" x2="711.0" y2="577.6" stroke="#0c0a02" stroke-width="0.9"/><line x1="663.6" y1="557.1" x2="709.7" y2="580.1" stroke="#8d7a14" stroke-width="0.9"/><line x1="664.1" y1="556.3" x2="710.1" y2="579.3" stroke="#0c0a02" stroke-width="0.9"/><line x1="663.2" y1="558.0" x2="709.3" y2="581.0" stroke="#0c0a02" stroke-width="0.9"/><line x1="661.9" y1="560.5" x2="708.0" y2="583.5" stroke="#8d7a14" stroke-width="0.9"/><line x1="662.4" y1="559.7" x2="708.4" y2="582.7" stroke="#0c0a02" stroke-width="0.9"/><line x1="661.5" y1="561.4" x2="707.6" y2="584.4" stroke="#0c0a02" stroke-width="0.9"/><line x1="660.3" y1="563.9" x2="706.3" y2="586.9" stroke="#8d7a14" stroke-width="0.9"/><line x1="660.7" y1="563.1" x2="706.7" y2="586.1" stroke="#0c0a02" stroke-width="0.9"/><line x1="659.8" y1="564.8" x2="705.9" y2="587.8" stroke="#0c0a02" stroke-width="0.9"/><line x1="658.6" y1="567.3" x2="704.6" y2="590.3" stroke="#8d7a14" stroke-width="0.9"/><line x1="659.0" y1="566.5" x2="705.0" y2="589.5" stroke="#0c0a02" stroke-width="0.9"/><line x1="658.1" y1="568.2" x2="704.2" y2="591.2" stroke="#0c0a02" stroke-width="0.9"/><line x1="656.9" y1="570.7" x2="702.9" y2="593.7" stroke="#8d7a14" stroke-width="0.9"/><line x1="657.3" y1="569.9" x2="703.3" y2="592.9" stroke="#0c0a02" stroke-width="0.9"/><line x1="656.4" y1="571.6" x2="702.5" y2="594.6" stroke="#0c0a02" stroke-width="0.9"/><line x1="655.2" y1="574.1" x2="701.2" y2="597.1" stroke="#8d7a14" stroke-width="0.9"/><line x1="655.6" y1="573.3" x2="701.6" y2="596.3" stroke="#0c0a02" stroke-width="0.9"/><line x1="654.7" y1="575.0" x2="700.8" y2="598.0" stroke="#0c0a02" stroke-width="0.9"/><line x1="653.5" y1="577.5" x2="699.5" y2="600.5" stroke="#8d7a14" stroke-width="0.9"/><line x1="653.9" y1="576.7" x2="699.9" y2="599.7" stroke="#0c0a02" stroke-width="0.9"/><line x1="653.0" y1="578.4" x2="699.1" y2="601.4" stroke="#0c0a02" stroke-width="0.9"/><line x1="653.0" y1="550.3" x2="699.1" y2="527.3" stroke="#0c0a02" stroke-width="0.8"/><line x1="654.1" y1="552.6" x2="700.2" y2="529.6" stroke="#0c0a02" stroke-width="0.8"/><line x1="655.3" y1="555.0" x2="701.4" y2="531.9" stroke="#0c0a02" stroke-width="0.8"/><line x1="656.5" y1="557.3" x2="702.5" y2="534.3" stroke="#0c0a02" stroke-width="0.8"/><line x1="657.6" y1="559.6" x2="703.7" y2="536.6" stroke="#0c0a02" stroke-width="0.8"/><line x1="658.8" y1="561.9" x2="704.9" y2="538.9" stroke="#0c0a02" stroke-width="0.8"/><line x1="660.0" y1="564.3" x2="706.0" y2="541.2" stroke="#0c0a02" stroke-width="0.8"/><line x1="661.1" y1="566.6" x2="707.2" y2="543.6" stroke="#0c0a02" stroke-width="0.8"/><line x1="662.3" y1="568.9" x2="708.4" y2="545.9" stroke="#0c0a02" stroke-width="0.8"/><line x1="663.4" y1="571.2" x2="709.5" y2="548.2" stroke="#0c0a02" stroke-width="0.8"/><line x1="664.6" y1="573.6" x2="710.7" y2="550.5" stroke="#0c0a02" stroke-width="0.8"/><line x1="665.8" y1="575.9" x2="711.8" y2="552.9" stroke="#0c0a02" stroke-width="0.8"/><line x1="666.9" y1="578.2" x2="713.0" y2="555.2" stroke="#0c0a02" stroke-width="0.8"/><line x1="668.1" y1="580.6" x2="714.2" y2="557.5" stroke="#0c0a02" stroke-width="0.8"/><line x1="669.3" y1="582.9" x2="715.3" y2="559.8" stroke="#0c0a02" stroke-width="0.8"/><line x1="670.4" y1="585.2" x2="716.5" y2="562.2" stroke="#0c0a02" stroke-width="0.8"/><line x1="671.6" y1="587.5" x2="717.7" y2="564.5" stroke="#0c0a02" stroke-width="0.8"/><line x1="672.8" y1="589.9" x2="718.8" y2="566.8" stroke="#0c0a02" stroke-width="0.8"/><line x1="673.9" y1="592.2" x2="720.0" y2="569.1" stroke="#0c0a02" stroke-width="0.8"/><line x1="675.1" y1="594.5" x2="721.1" y2="571.5" stroke="#0c0a02" stroke-width="0.8"/><line x1="676.2" y1="596.8" x2="722.3" y2="573.8" stroke="#0c0a02" stroke-width="0.8"/><line x1="677.4" y1="599.2" x2="723.5" y2="576.1" stroke="#0c0a02" stroke-width="0.8"/><line x1="678.6" y1="601.5" x2="724.6" y2="578.4" stroke="#0c0a02" stroke-width="0.8"/></g>
<polyline points="678.5,561.7 681.5,558.4 684.7,556.5" fill="none" stroke="#e07a1a" stroke-width="0.9" shape-rendering="auto"/>
<polyline points="684.5,564.4 687.5,561.1 692.7,557.6" fill="none" stroke="#e07a1a" stroke-width="0.9" shape-rendering="auto"/>
<polyline points="690.2,567.5 693.3,564.2 697.8,560.6" fill="none" stroke="#e07a1a" stroke-width="0.9" shape-rendering="auto"/>
<rect x="678.2" y="560.6" width="1.0" height="3.3" fill="#c4c4c4"/>
<rect x="684.0" y="561.5" width="1.0" height="4.9" fill="#c4c4c4"/>
<rect x="689.9" y="563.9" width="1.0" height="4.9" fill="#c4c4c4"/>
<polygon points="675.8,565.2 692.9,573.6 692.4,574.8 675.4,566.4" fill="#1c22a8"/>
<polygon points="686.1,573.2 692.3,576.0 692.3,577.0 686.1,574.2" fill="#8a8a8a"/>
<rect x="677.5" y="568.0" width="1.6" height="1.6" fill="#2a30c0"/>
<rect x="681.6" y="570.0" width="1.6" height="1.6" fill="#2a30c0"/>
<polygon points="693.4,566.0 701.3,561.9 709.3,565.5 709.3,576.0 701.7,579.3 694.3,578.5 693.4,576.0" fill="#0a0a0a"/>
<polygon points="694.8,566.2 701.3,563.0 707.9,566.0 701.3,569.0" fill="#6f9bcf"/>
<polygon points="694.3,567.2 699.7,569.9 699.7,573.6 694.3,570.9" fill="#343848"/>
<polygon points="694.3,571.3 699.7,574.0 699.7,578.1 696.0,577.3 694.3,575.0" fill="#44719f"/>
<polygon points="700.8,570.1 708.2,567.0 708.2,570.4 700.8,573.6" fill="#2c2f3c"/>
<polygon points="700.8,574.0 708.2,570.8 708.2,574.8 700.8,577.8" fill="#5b8ec4"/>
<polygon points="700.5,577.8 708.3,574.8 708.3,575.9 700.5,578.9" fill="#2233cc"/>
<rect x="701.0" y="576.9" width="1.2" height="1.2" fill="#f4e61a"/>
<rect x="706.9" y="574.0" width="1.2" height="1.2" fill="#f4e61a"/>
<polygon points="693.4,575.2 696.4,576.0 696.4,578.5 693.4,577.3" fill="#0a0a0a"/>
<rect x="694.2" y="576.2" width="1.2" height="1.2" fill="#2a30c0"/>
 </svg>
 <div class="t" style="left:14px"><span>0.0</span></div>
 <div class="t" style="left:110px"><span>0.1</span></div>
 <div class="t" style="left:206px"><span>0.2</span></div>
 <div class="t" style="left:302px"><span>0.3</span></div>
 <div class="t" style="left:398px"><span>0.4</span></div>
 <div class="t" style="left:463px"><span>0.0</span></div>
 <div class="t" style="left:494px"><span>0.5</span></div>
 <div class="t" style="left:559px"><span>0.1</span></div>
 <div class="t" style="left:590px"><span>0.6</span></div>
 <div class="t" style="left:655px"><span>0.2</span></div>
 <div class="t" style="left:686px"><span>0.7</span></div>
 <div class="cap" style="left:14px">Holztransporter_Trondheim_Spielerfarbe_leer.png</div>
 <div class="cap" style="left:463px">Holztransporter_Trondheim_Spielerfarbe_ladung.png</div>
</div>
</body>
</html>
